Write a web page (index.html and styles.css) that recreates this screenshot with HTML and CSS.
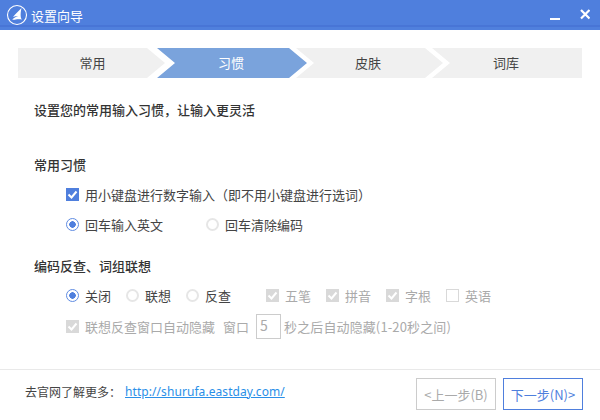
FILE: index.html
```html
<!DOCTYPE html>
<html lang="zh">
<head>
<meta charset="utf-8">
<title>设置向导</title>
<link rel="stylesheet" href="styles.css">
</head>
<body>
<div class="window">
  <header class="titlebar">
    <svg class="logo" width="22" height="22" viewBox="0 0 22 22"><circle cx="11" cy="11" r="9.5" fill="none" stroke="#fff" stroke-width="1.1"/><path d="M15.5 4C13.2 6.8 9.6 9.6 7 13c1.6-.7 3.4-1 5.4-1-1.9.6-4.2 1.7-6.2 3.6 1.200.3 2.500.3 3.800 0 2-.5 4-.6 6-.2-.7-.6-1.100-1.300-1.200-2.100-.4-3 0-6.300.7-9.300z" fill="#fff"/><path d="M7 16.800c2.800-.8 5.500-.8 8.500-.2" fill="none" stroke="#4f7fdd" stroke-width=".7"/></svg>
    <span class="title">设置向导</span>
    <svg class="winbtns" width="40" height="16" viewBox="0 0 40 16"><path d="M0 12h10" stroke="#fff" stroke-width="2"/><path d="M31 3l8.500 8.500M39.500 3l-8.500 8.500" stroke="#fff" stroke-width="2.200"/></svg>
  </header>
  <nav class="steps">
    <div class="step first">常用</div>
    <div class="step active">习惯</div>
    <div class="step third">皮肤</div>
    <div class="step last">词库</div>
  </nav>
  <main class="content">
    <h1 class="lead">设置您的常用输入习惯，让输入更灵活</h1>
    <section class="group g1">
      <h2 class="head">常用习惯</h2>
      <div class="row r1"><span class="cb on"><svg width="11" height="11" viewBox="0 0 11 11"><path d="M1.500 5.500l3 3 5-6" fill="none" stroke="#fff" stroke-width="2"/></svg></span><span class="lbl">用小键盘进行数字输入（即不用小键盘进行选词）</span></div>
      <div class="row r2"><span class="rd on"></span><span class="lbl w1">回车输入英文</span><span class="rd"></span><span class="lbl">回车清除编码</span></div>
    </section>
    <section class="group g2">
      <h2 class="head">编码反查、词组联想</h2>
      <div class="row r3">
        <span class="rd on"></span><span class="lbl w2">关闭</span>
        <span class="rd"></span><span class="lbl w2">联想</span>
        <span class="rd"></span><span class="lbl w3">反查</span>
        <span class="cb dis"><svg width="11" height="11" viewBox="0 0 11 11"><path d="M1.500 5.500l3 3 5-6" fill="none" stroke="#fff" stroke-width="2"/></svg></span><span class="lbl off w2">五笔</span>
        <span class="cb dis"><svg width="11" height="11" viewBox="0 0 11 11"><path d="M1.500 5.500l3 3 5-6" fill="none" stroke="#fff" stroke-width="2"/></svg></span><span class="lbl off w2">拼音</span>
        <span class="cb dis"><svg width="11" height="11" viewBox="0 0 11 11"><path d="M1.500 5.500l3 3 5-6" fill="none" stroke="#fff" stroke-width="2"/></svg></span><span class="lbl off w2">字根</span>
        <span class="cb empty"></span><span class="lbl off">英语</span>
      </div>
      <div class="row r4">
        <span class="cb dis"><svg width="11" height="11" viewBox="0 0 11 11"><path d="M1.500 5.500l3 3 5-6" fill="none" stroke="#fff" stroke-width="2"/></svg></span><span class="lbl off">联想反查窗口自动隐藏</span>
        <span class="lbl off win">窗口</span><span class="num">5</span><span class="lbl off tail">秒之后自动隐藏(1-20秒之间)</span>
      </div>
    </section>
  </main>
  <footer class="footer">
    <span class="more">去官网了解更多：</span>
    <a class="link" href="#">http://shurufa.eastday.com/</a>
    <span class="btn prev">&lt;上一步(B)</span>
    <span class="btn next">下一步(N)&gt;</span>
  </footer>
</div>
</body>
</html>
```
FILE: styles.css
```css
* { box-sizing: border-box; }
html, body { margin: 0; padding: 0; }
body { width: 600px; height: 420px; overflow: hidden; background: #fff; font-family: "Noto Sans CJK SC", "Noto Sans", sans-serif; font-size: 13px; color: #444; }
.window { width: 600px; height: 420px; display: flex; flex-direction: column; }
.titlebar { height: 30px; flex: none; display: flex; align-items: center; padding: 0 10px 0 6px; background: linear-gradient(#4f7fdd 0 25px, #4875d6 25px 27px, #5080dd 27px); color: #fff; }
.logo { flex: none; }
.title { margin-left: 3px; font-size: 13px; flex: 1; }
.winbtns { flex: none; margin-top: -1px; }
.steps { display: flex; height: 30px; margin: 18px 18px 0; flex: none; }
.step { flex: none; display: flex; align-items: center; justify-content: center; background: #f0f0f0; color: #444; padding: 0 2px 2px 0; }
.step.first { width: 147px; clip-path: polygon(0 0, 129px 0, 147px 15px, 129px 30px, 0 30px); padding-left: 2px; padding-right: 0; }
.step.active { width: 150px; margin-left: -8px; background: #7aa3dc; color: #fff; z-index: 1; clip-path: polygon(0 0, 132px 0, 150px 15px, 132px 30px, 0 30px, 18px 15px); }
.step.third { width: 147px; margin-left: -11px; clip-path: polygon(0 0, 129px 0, 147px 15px, 129px 30px, 0 30px, 18px 15px); padding-right: 3px; }
.step.last { width: 150px; margin-left: -11px; clip-path: polygon(0 0, 150px 0, 150px 30px, 0 30px, 18px 15px); }
.content { flex: 1; padding: 0 34px; }
.lead, .head { margin: 0; font-size: 13px; font-weight: 500; color: #333; line-height: 20px; }
.lead { margin-top: 22px; }
.g1 { margin-top: 35px; }
.g2 { margin-top: 22px; }
.row { display: flex; align-items: center; height: 20px; margin-left: 32px; }
.r1 { margin-top: 9px; }
.r2 { margin-top: 10px; }
.r3 { margin-top: 9px; }
.r4 { margin-top: 11px; }
.cb { width: 13px; height: 13px; flex: none; display: flex; align-items: center; justify-content: center; margin-right: 6px; }
.cb.on { background: #4f7fdd; }
.cb.dis { background: #d9d9d9; }
.cb.empty { border: 1px solid #d9d9d9; }
.rd { width: 13px; height: 13px; flex: none; border-radius: 50%; border: 2px solid #e6e6e6; margin-right: 6px; background: #fff; }
.rd.on { border: 1px solid #5f8ce2; background: radial-gradient(circle, #4f7fdd 0 3px, #fff 3.5px); }
.lbl { white-space: nowrap; }
.lbl.off { color: #aaa; }
.w1 { width: 121px; }
.w2 { width: 41px; }
.w3 { width: 61px; }
.win { margin-left: 8px; margin-right: 7px; }
.num { width: 25px; height: 25px; flex: none; border: 1px solid #ccc; color: #aaa; padding-left: 3px; font-size: 14px; line-height: 21px; margin-right: 3px; }
.tail { letter-spacing: .12px; }
.footer { height: 51px; flex: none; border-top: 1px solid #e9e9e9; display: flex; align-items: center; padding: 0 17px 0 25px; font-size: 12px; }
.more { color: #444; margin-bottom: 8px; }
.link { margin-left: 4px; margin-bottom: 8px; color: #2a8fe8; flex: 1; font-family: "Noto Sans", sans-serif; font-size: 12px; letter-spacing: .07px; }
.btn { width: 80px; height: 32px; display: flex; align-items: center; justify-content: center; font-size: 13px; margin-bottom: 2px; }
.prev { border: 1px solid #ccc; color: #aaa; margin-right: 7px; }
.next { border: 1px solid #4f7fdd; color: #4f7fdd; }
```
